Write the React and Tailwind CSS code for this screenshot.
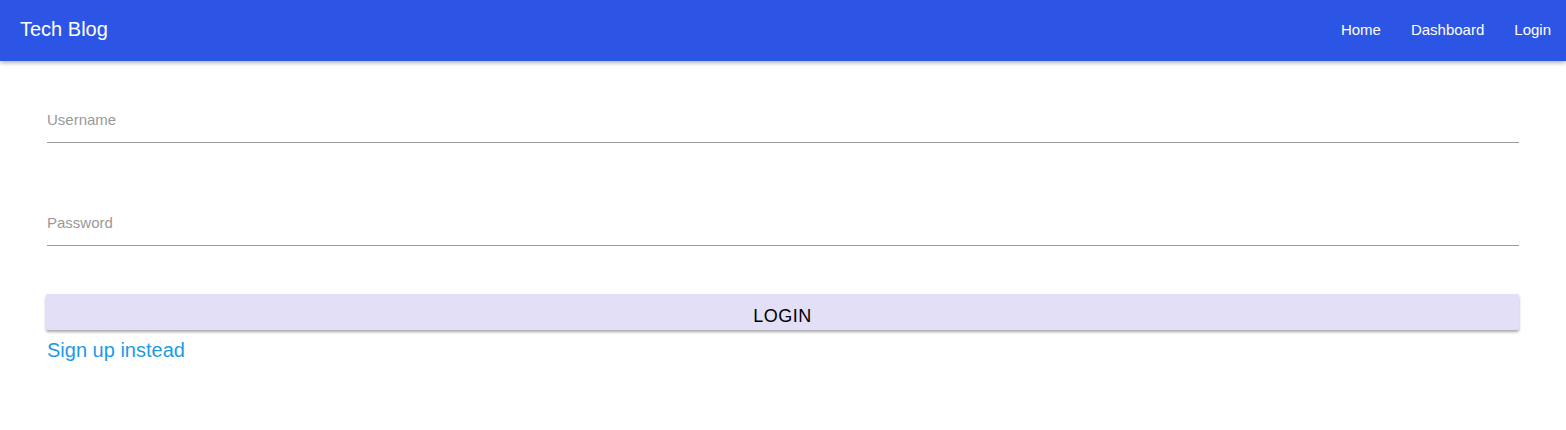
import React from "react";

function Field({ label, type }) {
  return (
    <div className="relative pt-[8px]">
      <label className="block text-[15px] leading-[20px] text-[#999999]">{label}</label>
      <input
        type={type}
        className="block w-full h-[13px] bg-transparent outline-none border-b border-[#9b9b9b]"
      />
    </div>
  );
}

export default function App() {
  return (
    <div className="min-h-[430px] bg-white font-['Liberation_Sans',Arial,sans-serif]">
      <nav className="h-[61px] bg-[#2d55e5] flex items-center justify-between pl-[20px] pr-[15px] shadow-[0_2px_4px_rgba(0,0,0,0.3)]">
        <span className="text-white text-[20px] pb-[3px]">Tech Blog</span>
        <div className="flex items-center gap-[30px] text-white text-[15px]">
          <a href="#">Home</a>
          <a href="#">Dashboard</a>
          <a href="#">Login</a>
        </div>
      </nav>

      <form className="px-[47px] pt-[41px]">
        <Field label="Username" type="text" />
        <div className="h-[62px]" />
        <Field label="Password" type="password" />
        <button
          type="button"
          className="mt-[48px] -ml-px w-[calc(100%+1px)] h-[36px] rounded-[2px] bg-[#e3dff6] text-black text-[18px] tracking-[0.5px] pt-[9px] shadow-[0_2px_3px_rgba(0,0,0,0.35)]"
        >
          LOGIN
        </button>
        <a href="#" className="block mt-[8px] text-[20px] leading-[24px] text-[#1e9be3]">
          Sign up instead
        </a>
      </form>
    </div>
  );
}
